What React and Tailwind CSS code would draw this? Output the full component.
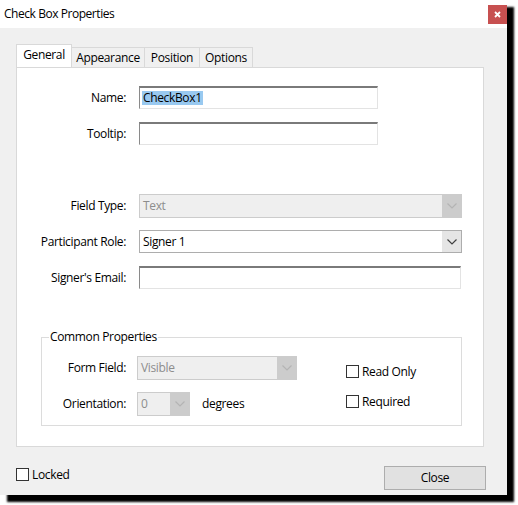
import React from 'react';

const font = { fontFamily: '"Open Sans", "Noto Sans", sans-serif' };

function Chevron({ disabled }) {
  return (
    <svg width="10" height="6" viewBox="0 0 10 6" className="block">
      <path d="M0.5 0.5 L5 5 L9.5 0.5" fill="none" stroke={disabled ? '#b4b4b4' : '#404040'} strokeWidth="1.2" />
    </svg>
  );
}

function TextBox({ w, children }) {
  return (
    <div
      className="h-[23px] bg-white border border-t-2 border-t-[#7a7a7a] border-l-[#8a8a8a] border-r-[#e3e3e3] border-b-[#e3e3e3] flex items-center pl-[2px]"
      style={{ width: w }}
    >
      {children}
    </div>
  );
}

function Select({ w, h, value, disabled }) {
  return (
    <div
      className={
        'flex border ' +
        (disabled ? 'border-[#cccccc] bg-[#cccccc]' : 'border-[#adadad] bg-[#e5e5e5]')
      }
      style={{ width: w, height: h }}
    >
      <div
        className={
          'flex-1 flex items-center pl-[3px] ' +
          (disabled ? 'bg-[#efefef] text-[#8d8d8d]' : 'bg-white text-black')
        }
      >
        {value}
      </div>
      <div className="w-[19px] flex items-center justify-center">
        <Chevron disabled={disabled} />
      </div>
    </div>
  );
}

function Check({ label }) {
  return (
    <div className="flex items-center">
      <div className="w-[13px] h-[13px] border border-[#333333] bg-white" />
      <span className="ml-[3px] leading-none">{label}</span>
    </div>
  );
}

function Row({ label, top, children }) {
  return (
    <div className="flex items-center" style={{ marginTop: top }}>
      <div className="w-[110px] text-right pr-[1px]">{label}</div>
      <div className="ml-[12px]">{children}</div>
    </div>
  );
}

export default function App() {
  return (
    <div className="w-[518px] h-[505px] bg-white text-[12px] tracking-[-0.35px] text-black" style={font}>
      <div className="w-[507px] h-[495px] bg-[#f0f0f0] flex flex-col shadow-[7px_7px_2px_rgba(0,0,0,1)]">
        {/* title bar */}
        <div className="h-[28px] bg-white flex items-start justify-between">
          <span className="ml-[4px] mt-[5px] text-[12px] tracking-[-0.45px]">Check Box Properties</span>
          <div className="mt-[5px] w-[19px] h-[19px] bg-[#c75050] flex items-center justify-center">
            <svg width="7" height="7" viewBox="0 0 7 7">
              <path d="M1 1 L6 6 M6 1 L1 6" stroke="#ffffff" strokeWidth="1.8" />
            </svg>
          </div>
        </div>

        <div className="flex flex-col pl-[16px] pt-[17px]">
          {/* tabs */}
          <div className="flex items-end h-[22px]">
            <div className="h-[23px] w-[56px] bg-white border border-[#d9d9d9] border-b-0 relative z-10 flex items-center justify-center pb-[2px]">
              General
            </div>
            <div className="h-[20px] w-[73px] border border-l-0 border-b-0 border-[#d9d9d9] flex items-center justify-center">
              Appearance
            </div>
            <div className="h-[20px] w-[55px] border border-l-0 border-b-0 border-[#d9d9d9] flex items-center justify-center">
              Position
            </div>
            <div className="h-[20px] w-[53px] border border-l-0 border-b-0 border-[#d9d9d9] flex items-center justify-center">
              Options
            </div>
          </div>

          {/* panel */}
          <div className="w-[468px] h-[380px] bg-white border border-[#d9d9d9] flex flex-col">
            <Row label="Name:" top={18}>
              <TextBox w={239}>
                <span className="bg-[#99c9f0] leading-[14px] px-[1px]">CheckBox1</span>
              </TextBox>
            </Row>
            <Row label="Tooltip:" top={13}>
              <TextBox w={239} />
            </Row>
            <Row label="Field Type:" top={49}>
              <Select w={323} h={24} value="Text" disabled />
            </Row>
            <Row label="Participant Role:" top={12}>
              <Select w={323} h={23} value="Signer 1" />
            </Row>
            <Row label="Signer's Email:" top={13}>
              <TextBox w={322} />
            </Row>

            {/* group */}
            <div className="ml-[24px] mt-[48px] w-[421px] h-[89px] border border-[#dcdcdc] relative">
              <span className="absolute left-[7px] top-[-9px] bg-white px-[1px] leading-[16px]">Common Properties</span>
              <div className="flex">
                <div className="flex flex-col">
                  <div className="flex items-center mt-[18px]">
                    <div className="w-[84px] text-right">Form Field:</div>
                    <div className="ml-[11px]">
                      <Select w={160} h={24} value="Visible" disabled />
                    </div>
                  </div>
                  <div className="flex items-center mt-[12px]">
                    <div className="w-[84px] text-right">Orientation:</div>
                    <div className="ml-[11px]">
                      <Select w={53} h={24} value="0" disabled />
                    </div>
                    <span className="ml-[12px]">degrees</span>
                  </div>
                </div>
                <div className="flex flex-col ml-[49px] mt-[27px] gap-[17px]">
                  <Check label="Read Only" />
                  <Check label="Required" />
                </div>
              </div>
            </div>
          </div>

          {/* bottom */}
          <div className="flex justify-between w-[470px]">
            <div className="mt-[21px]">
              <Check label="Locked" />
            </div>
            <div className="mt-[19px] w-[102px] h-[24px] bg-[#e1e1e1] border border-[#adadad] flex items-center justify-center">
              Close
            </div>
          </div>
        </div>
      </div>
    </div>
  );
}
